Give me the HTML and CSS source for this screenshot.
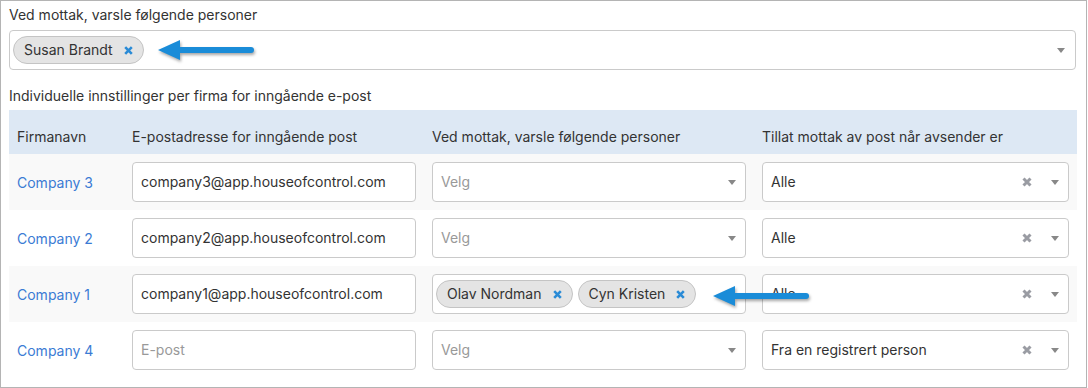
FILE: index.html
```html
<!DOCTYPE html>
<html lang="no">
<head>
  <meta charset="UTF-8">
  <title>Innstillinger for inngående e-post</title>
  <link rel="stylesheet" href="styles.css">
</head>
<body>

<div class="panel">
  <label class="field-label">Ved mottak, varsle følgende personer</label>
  <div class="select multi wide">
    <span class="tag">Susan Brandt <span class="tag-x"><svg width="9" height="9" viewBox="0 0 9 9"><path d="M1.2 1.2L7.8 7.8M7.8 1.2L1.2 7.8"/></svg></span></span>
    <span class="caret"></span>
  </div>

  <p class="section-label">Individuelle innstillinger per firma for inngående e-post</p>

  <table class="firms">
    <colgroup>
      <col class="c-name">
      <col class="c-mail">
      <col class="c-notify">
      <col class="c-allow">
    </colgroup>
    <thead>
      <tr>
        <th>Firmanavn</th>
        <th>E-postadresse for inngående post</th>
        <th>Ved mottak, varsle følgende personer</th>
        <th>Tillat mottak av post når avsender er</th>
      </tr>
    </thead>
    <tbody>
      <tr>
        <td><a href="#">Company 3</a></td>
        <td><div class="input">company3@app.houseofcontrol.com</div></td>
        <td><div class="select"><span class="placeholder">Velg</span><span class="caret"></span></div></td>
        <td><div class="select"><span>Alle</span><span class="clear"><svg width="10" height="10" viewBox="0 0 10 10"><path d="M1.5 1.5L8.5 8.5M8.5 1.5L1.5 8.5"/></svg></span><span class="caret"></span></div></td>
      </tr>
      <tr>
        <td><a href="#">Company 2</a></td>
        <td><div class="input">company2@app.houseofcontrol.com</div></td>
        <td><div class="select"><span class="placeholder">Velg</span><span class="caret"></span></div></td>
        <td><div class="select"><span>Alle</span><span class="clear"><svg width="10" height="10" viewBox="0 0 10 10"><path d="M1.5 1.5L8.5 8.5M8.5 1.5L1.5 8.5"/></svg></span><span class="caret"></span></div></td>
      </tr>
      <tr>
        <td><a href="#">Company 1</a></td>
        <td><div class="input">company1@app.houseofcontrol.com</div></td>
        <td>
          <div class="select multi">
            <span class="tag">Olav Nordman <span class="tag-x"><svg width="9" height="9" viewBox="0 0 9 9"><path d="M1.2 1.2L7.8 7.8M7.8 1.2L1.2 7.8"/></svg></span></span>
            <span class="tag">Cyn Kristen <span class="tag-x"><svg width="9" height="9" viewBox="0 0 9 9"><path d="M1.2 1.2L7.8 7.8M7.8 1.2L1.2 7.8"/></svg></span></span>
          </div>
        </td>
        <td><div class="select"><span>Alle</span><span class="clear"><svg width="10" height="10" viewBox="0 0 10 10"><path d="M1.5 1.5L8.5 8.5M8.5 1.5L1.5 8.5"/></svg></span><span class="caret"></span></div></td>
      </tr>
      <tr>
        <td><a href="#">Company 4</a></td>
        <td><div class="input"><span class="placeholder">E-post</span></div></td>
        <td><div class="select"><span class="placeholder">Velg</span><span class="caret"></span></div></td>
        <td><div class="select"><span>Fra en registrert person</span><span class="clear"><svg width="10" height="10" viewBox="0 0 10 10"><path d="M1.5 1.5L8.5 8.5M8.5 1.5L1.5 8.5"/></svg></span><span class="caret"></span></div></td>
      </tr>
    </tbody>
  </table>

  <!-- piler lagt oppå skjermbildet -->
  <svg class="arrow arrow-top" width="100" height="24" viewBox="0 0 100 24">
    <path d="M24 12H95" />
    <polygon points="2,12 24,2 24,22" />
  </svg>
  <svg class="arrow arrow-row" width="100" height="24" viewBox="0 0 100 24">
    <path d="M24 12H95" />
    <polygon points="2,12 24,2 24,22" />
  </svg>
</div>

</body>
</html>
```

FILE: styles.css
```css
body {
  margin: 0;
  font-family: Inter, "Liberation Sans", sans-serif;
  font-size: 14px;
  color: #333;
  background: #fff;
}
.panel {
  position: relative;
  box-sizing: border-box;
  width: 1087px;
  height: 388px;
  border: 1px solid #b4b4b4;
  padding: 4px 9px 0 8px;
}
.field-label {
  display: block;
  line-height: 20px;
  margin-bottom: 5px;
}
.section-label {
  margin: 16px 0 4px;
  line-height: 20px;
}
.select,
.input {
  position: relative;
  box-sizing: border-box;
  height: 40px;
  border: 1px solid #cacaca;
  border-radius: 4px;
  background: #fff;
  display: flex;
  align-items: center;
  padding: 0 8px;
  line-height: 20px;
  white-space: nowrap;
}
.select.wide {
  width: 1067px;
  height: 40px;
}
.select.multi {
  padding: 0 3px;
  gap: 5px;
}
.placeholder {
  color: #999;
}
.caret {
  position: absolute;
  right: 9px;
  top: 17px;
  width: 0;
  height: 0;
  border-top: 5px solid #888;
  border-left: 4px solid transparent;
  border-right: 4px solid transparent;
}
.wide .caret {
  right: 10px;
}
.clear {
  position: absolute;
  right: 36px;
  top: 14px;
  display: flex;
}
.clear path {
  stroke: #9a9ca3;
  stroke-width: 3;
  fill: none;
}
.tag {
  box-sizing: border-box;
  height: 28px;
  display: inline-flex;
  align-items: center;
  padding: 0 10px 0 10px;
  border: 1px solid #c4c4c4;
  border-radius: 14px;
  background: #e4e4e4;
  color: #333;
}
.tag-x {
  display: inline-flex;
  margin-left: 11px;
}
.tag-x path {
  stroke: #2a8bd6;
  stroke-width: 2.6;
  fill: none;
}
.firms {
  width: 1068px;
  border-collapse: collapse;
  table-layout: fixed;
}
.c-name { width: 115px; }
.c-mail { width: 300px; }
.c-notify { width: 330px; }
.c-allow { width: 323px; }
.firms th {
  background: #dde8f4;
  font-weight: normal;
  text-align: left;
  vertical-align: bottom;
  height: 44px;
  box-sizing: border-box;
  padding: 0 8px 7px;
  line-height: 20px;
  white-space: nowrap;
}
.firms td {
  height: 56px;
  box-sizing: border-box;
  padding: 8px;
  vertical-align: middle;
}
.firms tbody tr:nth-child(odd) td {
  background: #f9f9f9;
}
.firms a {
  color: #3b7bd4;
  text-decoration: none;
}
.arrow {
  position: absolute;
  filter: drop-shadow(1px 2px 1.5px rgba(0, 0, 0, 0.35));
}
.arrow path {
  stroke: #1a8cd8;
  stroke-width: 6;
  stroke-linecap: round;
  fill: none;
}
.arrow polygon {
  fill: #1a8cd8;
}
.arrow-top {
  left: 155px;
  top: 37px;
}
.arrow-row {
  left: 710px;
  top: 283px;
}
```
